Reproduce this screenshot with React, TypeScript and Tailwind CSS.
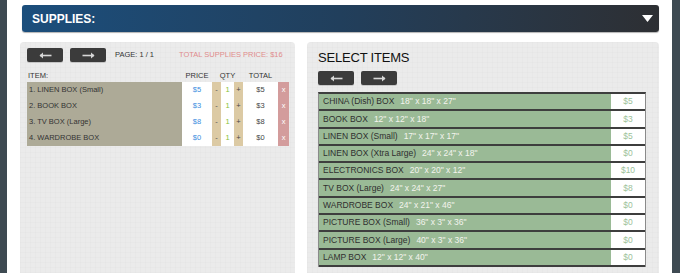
import { ReactNode } from 'react'

// ── Data ─────────────────────────────────────────────────────────────────────

const CART = [
  { name: '1. LINEN BOX (Small)', price: 5, qty: 1 },
  { name: '2. BOOK BOX', price: 3, qty: 1 },
  { name: '3. TV BOX (Large)', price: 8, qty: 1 },
  { name: '4. WARDROBE BOX', price: 0, qty: 1 },
]

const ITEMS = [
  { name: 'CHINA (Dish) BOX', dims: '18" x 18" x 27"', price: 5 },
  { name: 'BOOK BOX', dims: '12" x 12" x 18"', price: 3 },
  { name: 'LINEN BOX (Small)', dims: '17" x 17" x 17"', price: 5 },
  { name: 'LINEN BOX (Xtra Large)', dims: '24" x 24" x 18"', price: 0 },
  { name: 'ELECTRONICS BOX', dims: '20" x 20" x 12"', price: 10 },
  { name: 'TV BOX (Large)', dims: '24" x 24" x 27"', price: 8 },
  { name: 'WARDROBE BOX', dims: '24" x 21" x 46"', price: 0 },
  { name: 'PICTURE BOX (Small)', dims: '36" x 3" x 36"', price: 0 },
  { name: 'PICTURE BOX (Large)', dims: '40" x 3" x 36"', price: 0 },
  { name: 'LAMP BOX', dims: '12" x 12" x 40"', price: 0 },
]

const FONT = "font-['Liberation_Sans',Arial,sans-serif]"
const PANEL =
  'rounded-[4px] bg-[#ebebeb] bg-[linear-gradient(rgba(0,0,0,0.01)_1px,transparent_1px),linear-gradient(90deg,rgba(0,0,0,0.01)_1px,transparent_1px)] bg-[size:5px_5px]'
const COLS = 'grid grid-cols-[155px_30px_9px_13px_9px_35px_11px]'

// ── Pieces ───────────────────────────────────────────────────────────────────

function ArrowButton({ dir }: { dir: 'left' | 'right' }) {
  return (
    <button className="w-[36px] h-[14px] rounded-[2px] bg-[#3b3b3b] flex items-center justify-center shadow-[0_1px_0_rgba(0,0,0,0.15)]">
      <svg width="13" height="7" viewBox="0 0 13 7" className={dir === 'right' ? 'rotate-180' : ''}>
        <path d="M1 3.5H12.5" stroke="#d8d8d8" strokeWidth="1.6" />
        <path d="M0.5 3.5L4 0.5V6.5Z" fill="#d8d8d8" />
      </svg>
    </button>
  )
}

function Cell({ className, children }: { className: string; children?: ReactNode }) {
  return <div className={`flex items-center justify-center ${className}`}>{children}</div>
}

// ── Cart panel ───────────────────────────────────────────────────────────────

function CartPanel() {
  const total = CART.reduce((s, c) => s + c.price * c.qty, 0)
  return (
    <div className={`${PANEL} w-[275px] h-[240px] pl-[7px] pr-[6px] pt-[6px]`}>
      <div className="flex items-center h-[14px] text-[7.5px] text-[#333]">
        <ArrowButton dir="left" />
        <div className="ml-[7px]"><ArrowButton dir="right" /></div>
        <span className="ml-[9px]">PAGE: 1 / 1</span>
        <span className="ml-[25px] text-[#e08c8c]">TOTAL SUPPLIES PRICE: ${total}</span>
      </div>

      <div className={`${COLS} mt-[7px] h-[13px] items-center text-[7.5px] text-[#333]`}>
        <span className="pl-[1px]">ITEM:</span>
        <span className="text-center">PRICE</span>
        <span className="col-span-3 text-center">QTY</span>
        <span className="text-center">TOTAL</span>
        <span />
      </div>

      <div>
        {CART.map(c => (
          <div key={c.name} className={`${COLS} h-[16px] text-[7.5px]`}>
            <div className="bg-[#adaa97] flex items-center pl-[2px] text-[#333]">{c.name}</div>
            <Cell className="bg-white text-[#3b8de0]">${c.price}</Cell>
            <Cell className="bg-[#dccaa4] text-[#555]">-</Cell>
            <Cell className="bg-white text-[#86c23a]">{c.qty}</Cell>
            <Cell className="bg-[#dccaa4] text-[#444]">+</Cell>
            <Cell className="bg-white text-[#444]">${c.price * c.qty}</Cell>
            <Cell className="bg-[#d39c9c] text-white">x</Cell>
          </div>
        ))}
      </div>
    </div>
  )
}

// ── Select items panel ───────────────────────────────────────────────────────

function SelectPanel() {
  return (
    <div className={`${PANEL} flex-1 h-[240px] pl-[11px] pr-[13px] pt-[8px]`}>
      <h2 className="text-[13px] leading-[16px] text-[#111] tracking-[-0.2px]">SELECT ITEMS</h2>
      <div className="flex gap-[7px] mt-[5px]">
        <ArrowButton dir="left" />
        <ArrowButton dir="right" />
      </div>
      <div className="mt-[7px] border-t-2 border-[#3e3e3e] border-x border-x-[#8a8a8a]">
        {ITEMS.map(item => (
          <div key={item.name} className="flex h-[17.3px] border-b-2 border-[#3e3e3e] text-[8.5px]">
            <div className="flex-1 bg-[#9aba96] flex items-center pl-[4px]">
              <span className="text-[#2f2f2f]">{item.name}</span>
              <span className="ml-[6px] text-[#f4f4ee]">{item.dims}</span>
            </div>
            <div className="w-[34px] bg-white flex items-center justify-center text-[#9cc29a]">${item.price}</div>
          </div>
        ))}
      </div>
    </div>
  )
}

// ── Page ─────────────────────────────────────────────────────────────────────

export default function App() {
  return (
    <div className={`${FONT} flex w-[680px] h-[273px] overflow-hidden bg-[#3e4a52]`}>
      <div className="w-[7px] shrink-0" />
      <div className="flex-1 bg-white pl-[13px] pr-[13px] pt-[5px]">
        <div className="ml-[2px] h-[27px] rounded-[3px] bg-gradient-to-r from-[#1b4e7c] via-[#213f5c] to-[#2d2f33] flex items-center pl-[10px] pr-[6px] shadow-[0_1px_1px_rgba(0,0,0,0.3)]">
          <span className="text-white text-[12px] font-bold">SUPPLIES:</span>
          <svg width="11" height="7" viewBox="0 0 11 7" className="ml-auto">
            <path d="M0 0H11L5.5 7Z" fill="#ffffff" />
          </svg>
        </div>
        <div className="flex gap-[12px] mt-[10px]">
          <CartPanel />
          <SelectPanel />
        </div>
      </div>
      <div className="w-[8px] shrink-0" />
    </div>
  )
}
